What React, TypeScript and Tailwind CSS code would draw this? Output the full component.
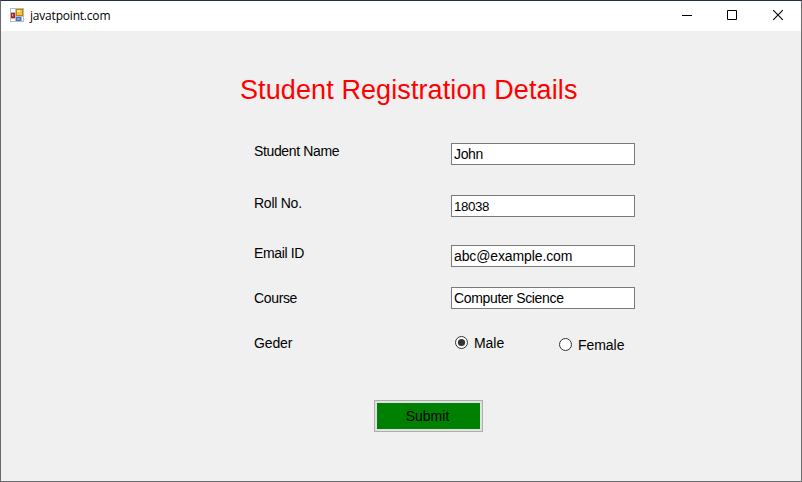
import type { ReactNode } from "react";

const FONT = "font-['Liberation_Sans',Arial,sans-serif]";

function AppIcon() {
  return (
    <svg width="14" height="14" viewBox="0 0 14 14" shapeRendering="crispEdges" className="mt-[-2px] ml-[9px] shrink-0">
      <rect width="14" height="14" fill="#b9bbbd" />
      <rect x="1" y="1" width="4" height="3" fill="#fff" />
      <rect x="1" y="11" width="4" height="2" fill="#fff" />
      <rect x="12" y="9" width="1" height="4" fill="#fff" />
      <rect x="1" y="5" width="4" height="5" fill="#a51d18" />
      <rect x="2" y="6" width="2" height="3" fill="#cf3a2c" />
      <rect x="2" y="6" width="1" height="2" fill="#f0a090" />
      <rect x="6" y="1" width="7" height="7" fill="#b9850c" />
      <rect x="7" y="2" width="5" height="5" fill="#f6c534" />
      <rect x="7" y="2" width="3" height="2" fill="#ffe68c" />
      <rect x="6" y="9" width="5" height="4" fill="#3b6fd0" />
      <rect x="7" y="10" width="3" height="2" fill="#79a7f0" />
    </svg>
  );
}

function TitleBar() {
  return (
    <header className="flex h-[30px] items-center bg-white">
      <AppIcon />
      <span className="ml-[6px] grow font-['Open_Sans','Noto_Sans',sans-serif] text-[12px] leading-[16px] tracking-[-0.2px] text-black">
        javatpoint.com
      </span>
      <svg width="136" height="30" viewBox="0 0 136 30" className="shrink-0" stroke="#000" fill="none">
        <path d="M17 14.5h10" />
        <path d="M62.5 9.5h9v9h-9z" />
        <path d="M108.2 9.2l9.6 9.6M117.8 9.2l-9.6 9.6" strokeWidth="1.1" />
      </svg>
    </header>
  );
}

function Row({ label, className, children }: { label: ReactNode; className: string; children: ReactNode }) {
  return (
    <div className={`flex items-start ${className}`}>
      <div className="w-[197px] shrink-0 leading-[16px]">{label}</div>
      {children}
    </div>
  );
}

function Field({ children, className }: { children: ReactNode; className: string }) {
  return (
    <div className={`h-[22px] w-[184px] border border-[#7a7a7a] bg-white pl-[2px] leading-[21px] ${className}`}>
      {children}
    </div>
  );
}

function Radio({ label, checked = false }: { label: ReactNode; checked?: boolean }) {
  return (
    <div className="flex h-[18px] items-start gap-[6px]">
      <svg width="13" height="13" viewBox="0 0 13 13" className="mt-px">
        <circle cx="6.5" cy="6.5" r="6" fill="#fff" stroke="#333" />
        {checked && <circle cx="6.5" cy="6.5" r="3.6" fill="#333" />}
      </svg>
      <span className="leading-[16px] tracking-[-0.05px]">{label}</span>
    </div>
  );
}

export default function App() {
  return (
    <div className="flex h-[482px] w-[802px] flex-col border border-[#6b6b6d] border-t-[#25304b] bg-[#f0f0f0]">
      <TitleBar />
      <main className={`flex flex-col text-[14px] whitespace-nowrap text-black ${FONT}`}>
        <h1 className="mt-[43px] ml-[239px] text-[27px] leading-[32px] tracking-[0.1px] text-[#ff0000]">
          Student Registration Details
        </h1>
        <div className="mt-[37px] ml-[253px] flex flex-col">
          <Row label={<span className="tracking-[-0.36px]">Student Name</span>} className="h-[52px]">
            <Field className="tracking-[-0.35px]">John</Field>
          </Row>
          <Row label={<span className="tracking-[-0.25px]">Roll No.</span>} className="h-[50px]">
            <Field className="text-[13.33px] tracking-[-0.4px]">18038</Field>
          </Row>
          <Row label={<span className="tracking-[-0.35px]">Email ID</span>} className="h-[42px]">
            <Field className="tracking-[-0.12px]">abc@example.com</Field>
          </Row>
          <Row label={<span className="block pt-[3px] tracking-[-0.35px]">Course</span>} className="h-[48px]">
            <Field className="tracking-[-0.35px]">Computer Science</Field>
          </Row>
          <Row label={<span className="tracking-[-0.15px]">Geder</span>} className="h-[65px]">
            <div className="flex pl-[4px]">
              <div className="w-[104px]">
                <Radio label="Male" checked />
              </div>
              <div className="pt-[2px]">
                <Radio label="Female" />
              </div>
            </div>
          </Row>
        </div>
        <button className="ml-[373px] h-[32px] w-[109px] border border-[#adadad] bg-[#e1e1e1] p-[2px]">
          <span className="block h-[26px] bg-[#008000] pr-[2px] leading-[27px]">Submit</span>
        </button>
      </main>
    </div>
  );
}
